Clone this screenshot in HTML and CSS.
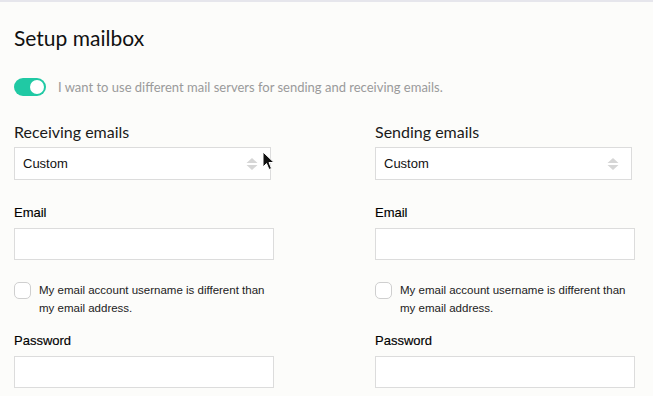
FILE: index.html
```html
<!DOCTYPE html>
<html>
<head>
<meta charset="utf-8">
<link rel="stylesheet" href="styles.css">
</head>
<body>
<div class="page">
  <h1 class="title">Setup mailbox</h1>
  <div class="toggle-row">
    <span class="toggle"><span class="knob"></span></span>
    <span class="toggle-text">I want to use different mail servers for sending and receiving emails.</span>
  </div>
  <div class="columns">
    <div class="col">
      <div class="section-label">Receiving emails</div>
      <div class="select">
        <span>Custom</span>
        <svg class="arrows" width="12" height="12" viewBox="0 0 12 12"><path d="M6 0 L11.5 5 H0.5 Z M0.5 7 H11.5 L6 12 Z" fill="#d6d6d6"/></svg>
      </div>
      <div class="field-label">Email</div>
      <div class="input"></div>
      <label class="check">
        <span class="box"></span>
        <span class="check-text">My email account username is different than my email address.</span>
      </label>
      <div class="field-label pw">Password</div>
      <div class="input"></div>
    </div>
    <div class="col">
      <div class="section-label">Sending emails</div>
      <div class="select">
        <span>Custom</span>
        <svg class="arrows" width="12" height="12" viewBox="0 0 12 12"><path d="M6 0 L11.5 5 H0.5 Z M0.5 7 H11.5 L6 12 Z" fill="#d6d6d6"/></svg>
      </div>
      <div class="field-label">Email</div>
      <div class="input"></div>
      <label class="check">
        <span class="box"></span>
        <span class="check-text">My email account username is different than my email address.</span>
      </label>
      <div class="field-label pw">Password</div>
      <div class="input"></div>
    </div>
  </div>
  <svg class="cursor" width="14" height="22" viewBox="0 0 14 22"><path d="M1 1 L1 16 L4.5 12.5 L7 18.5 L9.5 17.5 L7 11.5 L12 11.5 Z" fill="#111" stroke="#fff" stroke-width="1"/></svg>
</div>
</body>
</html>
```
FILE: styles.css
```css
html, body {
  margin: 0;
  padding: 0;
  background: #fcfcfa;
}
body {
  font-family: "Lato", "Helvetica Neue", Arial, sans-serif;
  color: #1a1a1a;
  width: 653px;
  height: 396px;
  overflow: hidden;
}
.page {
  position: relative;
  border-top: 2px solid #e6e6ec;
  padding: 0 14px;
  height: 394px;
  box-sizing: border-box;
}
.title {
  margin: 0;
  padding-top: 24px;
  font-size: 21px;
  font-weight: 400;
  line-height: 24px;
  color: #111;
}
.toggle-row {
  display: flex;
  align-items: center;
  margin-top: 28px;
  height: 18px;
}
.toggle {
  width: 32px;
  height: 18px;
  border-radius: 9px;
  background: #20c9a4;
  position: relative;
  flex: none;
}
.knob {
  position: absolute;
  right: 2px;
  top: 2px;
  width: 14px;
  height: 14px;
  border-radius: 50%;
  background: #fff;
}
.toggle-text {
  margin-left: 12px;
  font-size: 13px;
  color: #9a9a9a;
}
.columns {
  display: grid;
  grid-template-columns: 260px 260px;
  column-gap: 101px;
  margin-top: 26px;
}
.section-label {
  font-size: 16px;
  line-height: 20px;
  color: #1a1a1a;
}
.select {
  width: 257px;
  height: 33px;
  box-sizing: border-box;
  margin-top: 5px;
  border: 1px solid #dcdcdc;
  background: #fff;
  display: flex;
  align-items: center;
  justify-content: space-between;
  padding: 0 12px 0 8px;
  font-family: "Liberation Sans", Arial, sans-serif;
  font-size: 13px;
  color: #111;
}
.field-label {
  margin-top: 25px;
  font-family: "Liberation Sans", Arial, sans-serif;
  font-size: 13px;
  line-height: 16px;
  color: #000;
  -webkit-text-stroke: 0.15px #000;
}
.field-label.pw {
  margin-top: 16px;
}
.input {
  margin-top: 7px;
  width: 260px;
  height: 32px;
  box-sizing: border-box;
  border: 1px solid #dcdcdc;
  background: #fff;
}
.check {
  display: flex;
  align-items: flex-start;
  margin-top: 22px;
}
.box {
  flex: none;
  width: 17px;
  height: 17px;
  box-sizing: border-box;
  border: 1px solid #cfcfcf;
  border-radius: 5px;
  background: #fff;
}
.check-text {
  margin-left: 8px;
  max-width: 236px;
  font-family: "Liberation Sans", Arial, sans-serif;
  font-size: 11.5px;
  line-height: 18px;
  color: #222;
  margin-top: -1px;
}
.cursor {
  position: absolute;
  left: 262px;
  top: 149px;
}
```
